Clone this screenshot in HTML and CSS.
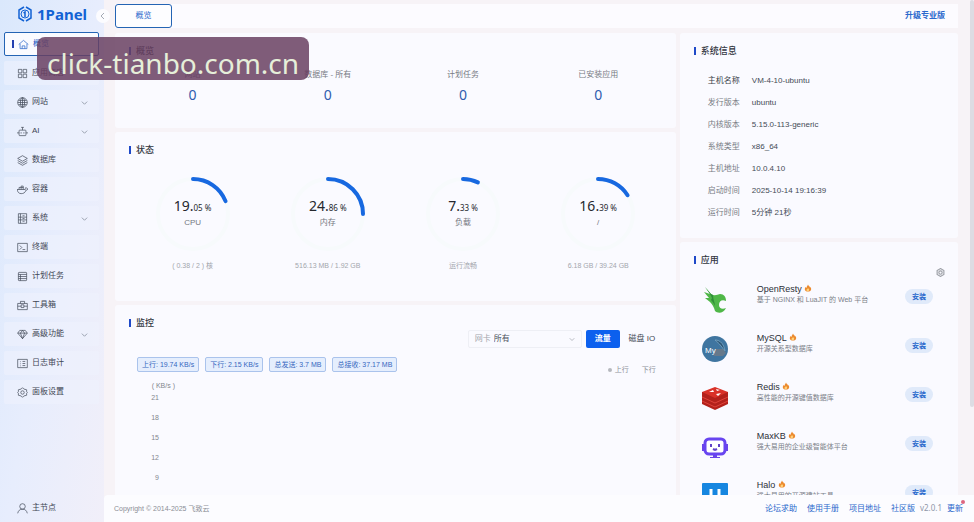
FILE: index.html
```html
<!DOCTYPE html>
<html lang="zh-CN">
<head>
    <meta charset="UTF-8">
    <meta name="viewport" content="width=device-width, initial-scale=1.0">
    <title>1Panel</title>
    <link rel="stylesheet" href="styles.css">
</head>
<body>

<svg class="defs" width="0" height="0">
    <symbol id="down" viewBox="0 0 8 8"><path d="M1 3l3 3 3-3" fill="none" stroke="currentColor"/></symbol>
    <symbol id="fire" viewBox="0 0 16 16">
        <path d="M8 1c1 3 3 3 4 6l1-1c3 5 1 9-5 9S0 11 3 6l2 2c0-3 2-4 3-7z" fill="#ec8a2e"/>
        <path d="M8 8c1 2 3 2 2 5-1 2-4 2-5 0s2-3 3-5z" fill="#ffd27a"/>
    </symbol>
</svg>

<div class="layout">
    <aside class="sidebar">
        <div class="logo">
            <svg viewBox="0 0 16 18" width="16" height="18" fill="none" stroke="currentColor">
                <path d="M7 2L2 5v8l5 3M9 2l5 3v8l-5 3" stroke-width="1.5"/>
                <circle cx="8" cy="9" r="4"/>
                <path d="M6.500 8L8 7v5" stroke-width="1.500"/>
            </svg>
            <span>1Panel</span>
        </div>
        <nav class="menu">
            <a href="#" class="menu-item active">
                <svg viewBox="0 0 16 16"><path d="M1 8l7-6 7 6M3 7v7h10V7M6 14v-4h4v4"/></svg>概览
            </a>
            <a href="#" class="menu-item">
                <svg viewBox="0 0 16 16"><path d="M2 2h5v5H2zM9 2h5v5H9zM2 9h5v5H2zM9 9h5v5H9z"/></svg>应用商店
            </a>
            <a href="#" class="menu-item">
                <svg viewBox="0 0 16 16"><circle cx="8" cy="8" r="7"/><ellipse cx="8" cy="8" rx="3" ry="7"/><path d="M1 8h14M8 1v14M2 5h12M2 11h12"/></svg>网站
                <svg class="arrow"><use href="#down"/></svg>
            </a>
            <a href="#" class="menu-item">
                <svg viewBox="0 0 16 16"><rect x="3" y="6" width="10" height="8" rx="1"/><path d="M8 6V2M6 2h4M3 10H0M13 10h3M6 9v2M10 9v2"/></svg>AI
                <svg class="arrow"><use href="#down"/></svg>
            </a>
            <a href="#" class="menu-item">
                <svg viewBox="0 0 16 16"><path d="M8 1l7 4-7 4-7-4zM1 8l7 4 7-4M1 11l7 4 7-4"/></svg>数据库
            </a>
            <a href="#" class="menu-item">
                <svg viewBox="0 0 16 16"><path d="M0 8h12c0-2 1-2 1-3 1 1 1 2 3 2-1 2-2 2-3 2-1 4-4 5-7 5S1 12 0 8zM3 8V5h6v3M6 8V3h3v3"/></svg>容器
            </a>
            <a href="#" class="menu-item">
                <svg viewBox="0 0 16 16"><path d="M2 1h12v14H2zM2 6h12M2 10h12M5 1v14M8 4h3M8 8h3M8 12h3"/></svg>系统
                <svg class="arrow"><use href="#down"/></svg>
            </a>
            <a href="#" class="menu-item">
                <svg viewBox="0 0 16 16"><path d="M1 2h14v12H1zM4 5l3 3-3 3M8 11h4"/></svg>终端
            </a>
            <a href="#" class="menu-item">
                <svg viewBox="0 0 16 16"><rect x="2" y="2" width="12" height="12" rx="1"/><path d="M2 5h12M2 8h12M2 11h12M5 5v9"/></svg>计划任务
            </a>
            <a href="#" class="menu-item">
                <svg viewBox="0 0 16 16"><path d="M1 5h14v9H1zM5 5V2h6v3M1 9h5M10 9h5M6 7h4v4H6z"/></svg>工具箱
            </a>
            <a href="#" class="menu-item">
                <svg viewBox="0 0 16 16"><path d="M4 2h8l3 4-7 8-7-8zM1 6h14M5 6l3 8 3-8-3-4z"/></svg>高级功能
                <svg class="arrow"><use href="#down"/></svg>
            </a>
            <a href="#" class="menu-item">
                <svg viewBox="0 0 16 16"><path d="M1 2h14v12H1zM5 5v1M5 8v1M5 11v1M8 5h4M8 8h4M8 11h4"/></svg>日志审计
            </a>
            <a href="#" class="menu-item">
                <svg viewBox="0 0 16 16"><path d="M8 1l2 2 4 1v3l1 1-1 1v3l-4 1-2 2-2-2-4-1V9L1 8l1-1V4l4-1z"/><circle cx="8" cy="8" r="2.500"/></svg>面板设置
            </a>
        </nav>
        <a href="#" class="menu-item node">
            <svg viewBox="0 0 16 16"><circle cx="8" cy="5" r="4"/><path d="M1 15c1-4 3-6 7-6s6 2 7 6"/></svg>主节点
        </a>
        <button class="collapse" aria-label="收起">
            <svg viewBox="0 0 8 8" width="8" height="8"><path d="M5 1L2 4l3 3" fill="none" stroke="currentColor"/></svg>
        </button>
    </aside>

    <div class="main">
        <main class="content">
            <header class="topbar">
                <button class="tab">概览</button>
                <a href="#" class="upgrade">升级专业版</a>
            </header>
            <div class="columns">
                <div class="column">
                    <section class="card overview">
                        <h2>概览</h2>
                        <div class="four">
                            <div><p>网站</p><a href="#">0</a></div>
                            <div><p>数据库 - 所有</p><a href="#">0</a></div>
                            <div><p>计划任务</p><a href="#">0</a></div>
                            <div><p>已安装应用</p><a href="#">0</a></div>
                        </div>
                    </section>

                    <section class="card status">
                        <h2>状态</h2>
                        <div class="four">
                            <div class="gauge">
                                <div class="ring">
                                    <svg viewBox="0 0 76 76"><circle class="track" cx="38" cy="38" r="35"/><circle class="value" cx="38" cy="38" r="35" pathLength="100" stroke-dasharray="19 100"/></svg>
                                    <div class="percent">19.<small>05 %</small></div>
                                    <p>CPU</p>
                                </div>
                                <span>( 0.38 / 2 ) 核</span>
                            </div>
                            <div class="gauge">
                                <div class="ring">
                                    <svg viewBox="0 0 76 76"><circle class="track" cx="38" cy="38" r="35"/><circle class="value" cx="38" cy="38" r="35" pathLength="100" stroke-dasharray="25 100"/></svg>
                                    <div class="percent">24.<small>86 %</small></div>
                                    <p>内存</p>
                                </div>
                                <span>516.13 MB / 1.92 GB</span>
                            </div>
                            <div class="gauge">
                                <div class="ring">
                                    <svg viewBox="0 0 76 76"><circle class="track" cx="38" cy="38" r="35"/><circle class="value" cx="38" cy="38" r="35" pathLength="100" stroke-dasharray="7 100"/></svg>
                                    <div class="percent">7.<small>33 %</small></div>
                                    <p>负载</p>
                                </div>
                                <span>运行流畅</span>
                            </div>
                            <div class="gauge">
                                <div class="ring">
                                    <svg viewBox="0 0 76 76"><circle class="track" cx="38" cy="38" r="35"/><circle class="value" cx="38" cy="38" r="35" pathLength="100" stroke-dasharray="16 100"/></svg>
                                    <div class="percent">16.<small>39 %</small></div>
                                    <p>/</p>
                                </div>
                                <span>6.18 GB / 39.24 GB</span>
                            </div>
                        </div>
                    </section>

                    <section class="card monitor">
                        <h2>监控</h2>
                        <div class="filters">
                            <div class="select-box">
                                <label for="card">网卡</label>
                                <select id="card"><option>所有</option></select>
                                <svg class="arrow"><use href="#down"/></svg>
                            </div>
                            <button class="primary">流量</button>
                            <button class="plain">磁盘 IO</button>
                        </div>
                        <div class="tags">
                            <span>上行: 19.74 KB/s</span>
                            <span>下行: 2.15 KB/s</span>
                            <span>总发送: 3.7 MB</span>
                            <span>总接收: 37.17 MB</span>
                            <div class="legend"><i></i><b>上行</b><b>下行</b></div>
                        </div>
                        <div class="axis">
                            <p class="unit">( KB/s )</p>
                            <p>21</p>
                            <p>18</p>
                            <p>15</p>
                            <p>12</p>
                            <p>9</p>
                        </div>
                    </section>
                </div>

                <div class="column">
                    <section class="card system">
                        <h2>系统信息</h2>
                        <table>
                            <tr class="first"><th scope="row">主机名称</th><td>VM-4-10-ubuntu</td></tr>
                            <tr><th scope="row">发行版本</th><td>ubuntu</td></tr>
                            <tr><th scope="row">内核版本</th><td>5.15.0-113-generic</td></tr>
                            <tr><th scope="row">系统类型</th><td>x86_64</td></tr>
                            <tr><th scope="row">主机地址</th><td>10.0.4.10</td></tr>
                            <tr><th scope="row">启动时间</th><td>2025-10-14 19:16:39</td></tr>
                            <tr><th scope="row">运行时间</th><td>5分钟 21秒</td></tr>
                        </table>
                    </section>

                    <section class="card apps">
                        <h2>应用</h2>
                        <button class="gear" aria-label="设置">
                            <svg viewBox="0 0 16 16" width="9" height="9" fill="none" stroke="currentColor" stroke-width="2"><path d="M8 1l6 3.500v7L8 15l-6-3.500v-7z"/><circle cx="8" cy="8" r="3"/></svg>
                        </button>
                        <div class="app">
                            <svg class="app-icon" viewBox="0 0 32 32">
                                <path d="M6 3l6 7c3 2 6 1 9 0 4 0 6 3 6 7-4-2-7 0-7 4 0 3 3 5 7 3-2 5-8 6-11 3-1-4-3-7-5-9l-5-4 4 0-5-6 6 2z" fill="#4fb748"/>
                                <path d="M6 3l6 7 2 1c0 4 2 8 2 11-1-2-2-4-4-6l1-2-2-4z" fill="#2f8f38"/>
                            </svg>
                            <div class="app-text"><h3>OpenResty <svg><use href="#fire"/></svg></h3><p>基于 NGINX 和 LuaJIT 的 Web 平台</p></div>
                            <button>安装</button>
                        </div>
                        <div class="app">
                            <svg class="app-icon" viewBox="0 0 32 32">
                                <circle cx="16" cy="16" r="13" fill="#3f75a0"/>
                                <path d="M16 7c6 0 9 5 10 11l-4-5c-2-3-4-4-6-6z" fill="#2c5575" stroke="#6f9dbc"/>
                                <path d="M16 16h8l3 4-3 3h-9z" fill="#66798b"/>
                                <text x="6" y="20" class="mysql">My</text>
                            </svg>
                            <div class="app-text"><h3>MySQL <svg><use href="#fire"/></svg></h3><p>开源关系型数据库</p></div>
                            <button>安装</button>
                        </div>
                        <div class="app">
                            <svg class="app-icon" viewBox="0 0 32 32">
                                <path d="M3 10v12l13 6 13-6V10z" fill="#b3211b"/>
                                <path d="M3 19l13 6 13-6M3 15l13 6 13-6" fill="none" stroke="#e0423a"/>
                                <path d="M3 10l13-5 13 5-13 6z" fill="#d93128"/>
                                <path d="M10 10l4-2 1 2zM17 12l5-1-3 3zM17 7l4 1-3 1z" fill="#fff"/>
                            </svg>
                            <div class="app-text"><h3>Redis <svg><use href="#fire"/></svg></h3><p>高性能的开源键值数据库</p></div>
                            <button>安装</button>
                        </div>
                        <div class="app">
                            <svg class="app-icon" viewBox="0 0 32 32">
                                <path d="M3 13h3v7H3zM26 13h3v7h-3zM14 23h4v3h-4zM11 26h10v1H11z" fill="#6a45e8"/>
                                <rect x="6" y="8" width="20" height="15" rx="4" fill="#fff" stroke="#6845f0" stroke-width="3"/>
                                <path d="M12 13v3M20 13v3M14 18l2 1 2-1" fill="none" stroke="#6041c8" stroke-width="2"/>
                            </svg>
                            <div class="app-text"><h3>MaxKB <svg><use href="#fire"/></svg></h3><p>强大易用的企业级智能体平台</p></div>
                            <button>安装</button>
                        </div>
                        <div class="app">
                            <svg class="app-icon" viewBox="0 0 32 32">
                                <rect x="3" y="3" width="26" height="26" rx="1" fill="#1686e0"/>
                                <path d="M12 9v15M20 9v15M12 17h8" stroke="#fff" stroke-width="3"/>
                            </svg>
                            <div class="app-text"><h3>Halo <svg><use href="#fire"/></svg></h3><p>强大易用的开源建站工具</p></div>
                            <button>安装</button>
                        </div>
                    </section>
                </div>
            </div>
        </main>
        <footer class="footer">
            <span class="copyright">Copyright © 2014-2025 飞致云</span>
            <a href="#">论坛求助</a>
            <a href="#">使用手册</a>
            <a href="#">项目地址</a>
            <span class="version"><a href="#">社区版</a><em>v2.0.1</em><a href="#" class="update">更新</a></span>
        </footer>
        <div class="scrollbar"></div>
    </div>
</div>

<div class="watermark">click-tianbo.com.cn</div>

</body>
</html>
```
FILE: styles.css
```css
* {
  box-sizing: border-box;
}

body {
  margin: 0;
  font-family: "Liberation Sans", "Noto Sans CJK SC", sans-serif;
  font-size: 8px;
  line-height: 12px;
  color: #444a56;
  background-color: #f7f3f7;
}

h2, h3, p {
  margin: 0;
  font-weight: normal;
}

a {
  color: #2a68cc;
  text-decoration: none;
}

button {
  padding: 0;
  border: none;
  background: none;
  font: inherit;
  color: inherit;
}

.defs {
  position: absolute;
}

.layout {
  display: flex;
  height: 100vh;
  overflow: hidden;
}

/* sidebar */
.sidebar {
  position: relative;
  display: flex;
  flex-direction: column;
  flex: none;
  width: 104px;
  padding: 5px 5px 2px 4px;
  background: linear-gradient(100deg, #dae8fc, #e7edfd 50%, #f1eff9);
}

.logo {
  display: flex;
  align-items: center;
  gap: 4px;
  height: 18px;
  padding-left: 13px;
  margin-bottom: 9px;
  color: #1262d4;
}

.logo span {
  font-family: "Noto Sans", sans-serif;
  font-size: 15px;
  font-weight: bold;
}

.menu {
  display: flex;
  flex-direction: column;
  gap: 5px;
}

.menu-item {
  display: flex;
  align-items: center;
  gap: 4px;
  height: 24px;
  padding: 0 11px 0 13px;
  border-radius: 2px;
  color: #3f4654;
  background-color: rgba(238, 241, 254, 0.6);
}

.menu-item svg {
  width: 11px;
  height: 11px;
  fill: none;
  stroke: currentColor;
}

.menu-item .arrow {
  width: 7px;
  height: 7px;
  margin-left: auto;
  color: #8f97a6;
}

.menu-item.active {
  padding-left: 7px;
  border: 1px solid #2464b4;
  color: #1e5fc6;
  background-color: #fafbff;
}

.menu-item.active::before {
  content: "";
  width: 2px;
  height: 8px;
  background-color: #2440b0;
}

.node {
  margin-top: auto;
  background: none;
}

.collapse {
  position: absolute;
  top: 9px;
  right: -6px;
  width: 14px;
  height: 14px;
  border-radius: 50%;
  color: #a3a9b5;
  background-color: #fcfcff;
}

.collapse svg {
  display: block;
  margin: auto;
}

/* main area */
.main {
  position: relative;
  display: flex;
  flex-direction: column;
  flex: 1;
  min-width: 0;
}

.content {
  flex: 1;
  min-height: 0;
  overflow: hidden;
  padding: 4px 16px 0 11px;
}

.topbar {
  display: flex;
  align-items: center;
  justify-content: space-between;
  height: 24px;
  padding-right: 13px;
  margin-bottom: 5px;
  background-color: #fcfbff;
}

.tab {
  width: 57px;
  height: 24px;
  border: 1px solid #2464b4;
  border-radius: 3px;
  color: #2a68cc;
  background-color: #fdfdff;
}

.upgrade {
  font-weight: bold;
}

.columns {
  display: grid;
  grid-template-columns: 1fr 33%;
  gap: 4px;
}

.column {
  display: flex;
  flex-direction: column;
  gap: 4px;
  min-width: 0;
}

.card {
  padding: 11px 10px;
  border-radius: 3px;
  background-color: #fafaff;
}

.card h2 {
  display: flex;
  align-items: center;
  gap: 5px;
  height: 14px;
  padding-left: 4px;
  font-size: 9px;
  font-weight: 500;
  color: #30343d;
}

.card h2::before {
  content: "";
  width: 2px;
  height: 8px;
  background-color: #1f49c8;
}

.four {
  display: grid;
  grid-template-columns: repeat(4, 1fr);
  text-align: center;
}

.overview {
  height: 95px;
}

.overview .four {
  padding-top: 11px;
  color: #777b84;
}

.overview .four a {
  font-family: "Noto Sans", sans-serif;
  font-size: 14px;
  line-height: 28px;
  color: #2f5cae;
}

.status {
  height: 169px;
}

.gauge {
  display: flex;
  flex-direction: column;
  align-items: center;
  gap: 8px;
  padding-top: 19px;
}

.gauge span {
  font-size: 7px;
  color: #a3a6ad;
}

.ring {
  display: grid;
  justify-items: center;
  align-content: start;
  width: 76px;
  height: 76px;
}

.ring svg {
  grid-area: 1 / 1 / 4 / 2;
  width: 76px;
  height: 76px;
  transform: rotate(-90deg);
}

.ring .percent {
  grid-area: 1 / 1;
  padding-top: 21px;
  font-family: "Noto Sans", sans-serif;
  font-size: 14px;
  line-height: 18px;
  color: #25282e;
}

.percent small {
  font-size: 8px;
}

.ring p {
  grid-area: 2 / 1;
  color: #74777f;
}

.track {
  fill: none;
  stroke: #f7fafc;
  stroke-width: 4;
}

.value {
  fill: none;
  stroke: #1768e0;
  stroke-width: 4;
  stroke-linecap: round;
}

.filters {
  display: flex;
  align-items: center;
  justify-content: flex-end;
  height: 18px;
  padding-right: 2px;
}

.select-box {
  display: flex;
  align-items: center;
  gap: 3px;
  width: 114px;
  height: 18px;
  margin-right: 4px;
  padding: 0 6px;
  border: 1px solid #eeeff5;
  border-radius: 2px;
  color: #a3a6ad;
}

.select-box select {
  appearance: none;
  flex: 1;
  border: none;
  padding: 0;
  background: none;
  font: inherit;
  color: #4c515c;
}

.select-box .arrow {
  width: 6px;
  height: 6px;
}

.primary {
  width: 34px;
  height: 18px;
  border-radius: 2px;
  font-weight: bold;
  color: #fff;
  background-color: #0c60ee;
}

.plain {
  width: 44px;
  height: 18px;
}

.tags {
  display: flex;
  align-items: flex-start;
  gap: 6px;
  padding: 9px 10px 0 12px;
  font-size: 7px;
}

.tags span {
  height: 15px;
  padding: 0 4px;
  border: 1px solid #aac3ec;
  border-radius: 2px;
  line-height: 13px;
  color: #3667c0;
  background-color: #e5eefd;
}

.legend {
  display: flex;
  align-items: center;
  gap: 3px;
  margin-left: auto;
  padding-top: 7px;
  color: #8d9098;
}

.legend i {
  width: 4px;
  height: 4px;
  border-radius: 50%;
  background-color: #b5b8be;
}

.legend b {
  font-weight: normal;
}

.legend b + b {
  margin-left: 10px;
}

.axis {
  width: 42px;
  padding: 4px 8px 0 0;
  font-size: 7px;
  text-align: right;
  color: #83868e;
}

.axis p {
  margin-bottom: 8px;
}

.axis .unit {
  margin: 0 -16px 0 0;
}

/* system information */
.system {
  height: 205px;
}

.system table {
  margin: 12px 0 0 18px;
  border-collapse: collapse;
}

.system th {
  width: 44px;
  height: 22px;
  padding: 0;
  font-weight: normal;
  text-align: left;
  color: #777b84;
}

.system .first th {
  color: #3b3f48;
}

.system td {
  padding: 0;
}

/* applications */
.gear {
  display: block;
  width: 9px;
  height: 9px;
  margin: 1px 3px 7px auto;
  color: #9c9fa6;
}

.gear svg {
  display: block;
}

.app {
  display: flex;
  align-items: flex-start;
  height: 49px;
  padding: 0 15px 0 9px;
}

.app-icon {
  flex: none;
  width: 32px;
  height: 32px;
  margin: 0 26px 0 0;
}

.mysql {
  font-size: 8px;
  fill: #fff;
}

.app-text {
  flex: 1;
}

.app-text h3 {
  font-size: 9px;
  line-height: 11px;
  color: #2c3038;
}

.app-text h3 svg {
  width: 8px;
  height: 8px;
}

.app-text p {
  font-size: 7px;
  line-height: 10px;
  color: #7b7f88;
}

.app button {
  width: 28px;
  height: 15px;
  margin-top: 5px;
  border-radius: 8px;
  font-size: 7px;
  font-weight: bold;
  color: #2a68cc;
  background-color: #e0eafa;
}

/* footer */
.footer {
  display: flex;
  align-items: center;
  gap: 10px;
  height: 27px;
  padding: 0 11px 0 10px;
  border-top-left-radius: 4px;
  background-color: #fcfcff;
}

.copyright {
  margin-right: auto;
  font-size: 7px;
  color: #8b8e96;
}

.version em {
  margin: 0 5px;
  font-family: "Noto Sans", sans-serif;
  font-style: normal;
  color: #8f97a8;
}

.update {
  position: relative;
}

.update::after {
  content: "";
  position: absolute;
  top: -4px;
  right: -2px;
  width: 4px;
  height: 4px;
  border-radius: 50%;
  background-color: #dc6680;
}

.scrollbar {
  position: absolute;
  top: 0;
  right: 0;
  width: 4px;
  height: 78%;
  border-radius: 2px;
  background-color: #dddce3;
}

.watermark {
  position: absolute;
  top: 37px;
  left: 37px;
  padding: 12px 10px 3px;
  border-radius: 8px;
  font-family: "Noto Sans", sans-serif;
  font-size: 28px;
  line-height: 28px;
  color: #e6efd9;
  background-color: rgba(104, 64, 98, 0.85);
}
```
